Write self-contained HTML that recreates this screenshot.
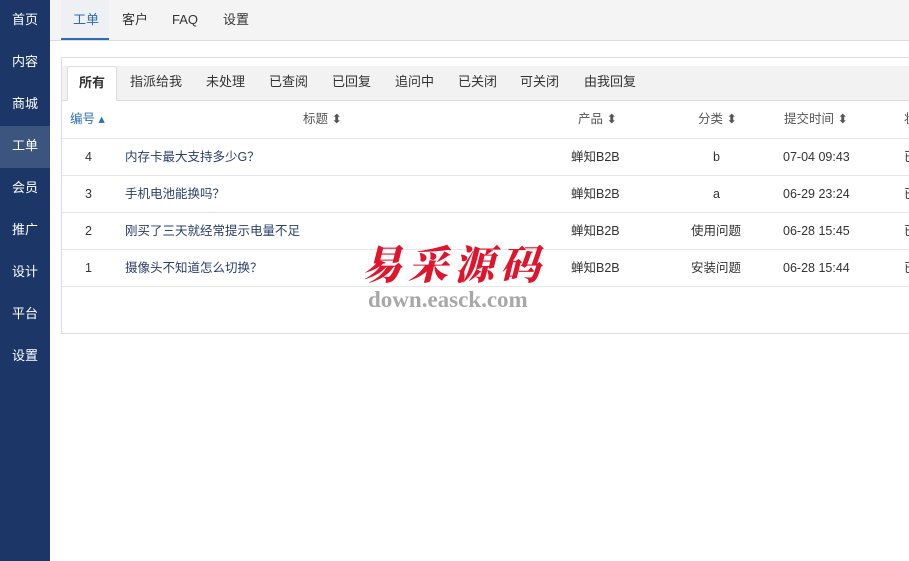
<!DOCTYPE html>
<html><head><meta charset="utf-8"><style>
*{margin:0;padding:0;box-sizing:border-box}
body{width:909px;height:561px;overflow:hidden;background:#fff;font-family:"Liberation Sans","Noto Sans CJK SC",sans-serif;font-size:13px;color:#333;position:relative}
.side{position:absolute;left:0;top:0;width:50px;height:561px;background:#1b3667}
.side div{height:42px;line-height:40px;color:#fff;text-align:center;font-size:13px}
.side .on{background:#3b557f}
.top{position:absolute;left:50px;top:0;right:0;height:41px;background:#f4f4f4;border-bottom:1px solid #ddd}
.top span{position:absolute;top:0;line-height:40px;font-size:13px;color:#333}
.top .on{color:#2a6db5}
.topline{position:absolute;left:61px;top:38px;width:48px;height:2px;background:#2a6db5}
.top .onbg{position:absolute;left:11px;top:0;width:48px;height:40px;background:#eef0f3}
.panel{position:absolute;left:61px;top:57px;width:860px;height:277px;border:1px solid #ddd;background:#fff}
.tabs{position:absolute;left:0;top:8px;width:860px;height:35px;background:#f2f2f2;border-bottom:1px solid #ddd}
.tabs span{position:absolute;top:0;line-height:32px;font-size:13px;color:#333}
.tabs .act{position:absolute;left:5px;top:0;width:50px;height:35px;background:#fff;border:1px solid #ddd;border-bottom:none;border-radius:3px 3px 0 0;font-weight:bold;text-align:center;line-height:32px}
.row{position:absolute;left:0;width:860px;height:37px;border-bottom:1px solid #e6e6e6}
.row span{position:absolute;top:0;line-height:36px;font-size:12.5px}
.t{color:#2b3f6b}
.h span{color:#555}
.wm1{position:absolute;left:362px;top:238px;font-family:"Noto Serif CJK SC",serif;font-weight:900;font-size:40px;line-height:50px;color:#e0142c;letter-spacing:6px;font-style:italic}
.wm2{position:absolute;left:368px;top:286px;font-family:"Liberation Serif",serif;font-weight:bold;font-size:23px;line-height:28px;color:#a8a8a8}
</style></head><body>
<div class="side">
<div>首页</div><div>内容</div><div>商城</div><div class="on">工单</div><div>会员</div><div>推广</div><div>设计</div><div>平台</div><div>设置</div>
</div>
<div class="top"><div class="onbg"></div>
<span class="on" style="left:23px">工单</span><span style="left:72px">客户</span><span style="left:122px">FAQ</span><span style="left:173px">设置</span></div>
<div class="topline"></div>
<div class="panel">
<div class="tabs"><div class="act">所有</div>
<span style="left:68px">指派给我</span><span style="left:144px">未处理</span><span style="left:207px">已查阅</span><span style="left:270px">已回复</span><span style="left:333px">追问中</span><span style="left:396px">已关闭</span><span style="left:458px">可关闭</span><span style="left:522px">由我回复</span></div>
<div class="row h" style="top:43px;height:38px"><span style="left:8px;color:#2a6db5;line-height:36px">编号 ▴</span><span style="left:241px">标题 ⬍</span><span style="left:516px">产品 ⬍</span><span style="left:636px">分类 ⬍</span><span style="left:722px">提交时间 ⬍</span><span style="left:842px">状</span></div>
<div class="row" style="top:81px"><span style="left:23px">4</span><span class="t" style="left:63px">内存卡最大支持多少G？</span><span style="left:509px">蝉知B2B</span><span style="left:651px">b</span><span style="left:721px">07-04 09:43</span><span style="left:842px">已</span></div>
<div class="row" style="top:118px"><span style="left:23px">3</span><span class="t" style="left:63px">手机电池能换吗？</span><span style="left:509px">蝉知B2B</span><span style="left:651px">a</span><span style="left:721px">06-29 23:24</span><span style="left:842px">已</span></div>
<div class="row" style="top:155px"><span style="left:23px">2</span><span class="t" style="left:63px">刚买了三天就经常提示电量不足</span><span style="left:509px">蝉知B2B</span><span style="left:629px">使用问题</span><span style="left:721px">06-28 15:45</span><span style="left:842px">已</span></div>
<div class="row" style="top:192px"><span style="left:23px">1</span><span class="t" style="left:63px">摄像头不知道怎么切换？</span><span style="left:509px">蝉知B2B</span><span style="left:629px">安装问题</span><span style="left:721px">06-28 15:44</span><span style="left:842px">已</span></div>
</div>
<div class="wm1">易采源码</div>
<div class="wm2">down.easck.com</div>
</body></html>
